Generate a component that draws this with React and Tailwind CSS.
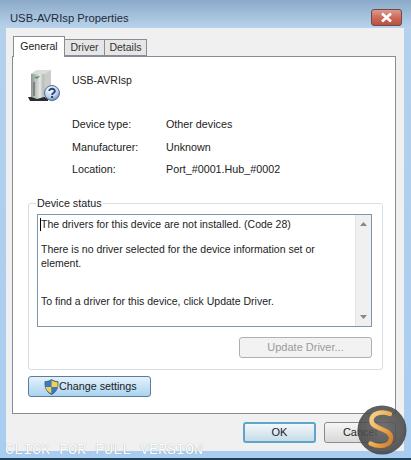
const fontStack = { fontFamily: '"Liberation Sans", Arial, sans-serif' };

function DeviceIcon() {
  return (
    <svg width="36" height="36" viewBox="0 0 36 36" className="block">
      <defs>
        <linearGradient id="tower" x1="0" x2="1" y1="0" y2="0">
          <stop offset="0" stopColor="#8f9794" />
          <stop offset="0.45" stopColor="#e4e8e6" />
          <stop offset="0.6" stopColor="#b7bdba" />
          <stop offset="1" stopColor="#eef0ef" />
        </linearGradient>
        <radialGradient id="help" cx="0.4" cy="0.3" r="0.8">
          <stop offset="0" stopColor="#ffffff" />
          <stop offset="0.6" stopColor="#b9cfe8" />
          <stop offset="1" stopColor="#4a6fa5" />
        </radialGradient>
      </defs>
      <path d="M0 28 L20 28 L20 32 L2 32 Z" fill="#2c2c2c" />
      <path d="M3 5 L9 1 L23 1 L23 26 L9 30 L3 28 Z" fill="url(#tower)" />
      <path d="M3 5 L9 1 L23 1 L17 5 Z" fill="#d9dedb" />
      <path d="M17 5 L23 1 L23 26 L17 29 Z" fill="#c8cdca" />
      <path d="M6 8 L12 7 L9 10 Z" fill="#4a9a55" />
      <rect x="5" y="13" width="2" height="14" fill="#7d8582" />
      <circle cx="24" cy="24" r="7.5" fill="url(#help)" stroke="#5b6f8c" />
      <path d="M21.3 22 C21.3 19 27 19 26.8 22.3 C26.6 24.2 24.2 24 24.1 26" fill="none" stroke="#25427c" strokeWidth="1.9" />
      <rect x="23.1" y="27" width="2" height="2" fill="#25427c" />
    </svg>
  );
}

function ShieldIcon() {
  return (
    <svg width="15" height="16" viewBox="0 0 15 16" className="block">
      <path d="M7.5 0.5 C9.5 2 11.5 2.5 14 2.5 C14.5 9 12 13.5 7.5 15.5 C3 13.5 0.5 9 1 2.5 C3.5 2.5 5.5 2 7.5 0.5 Z" fill="#3f6fae" stroke="#48597a" strokeWidth="0.8" />
      <path d="M7.5 1.5 L7.5 8 L1.6 8 C1.4 6 1.4 4.5 1.6 3.2 C3.8 3.1 5.6 2.7 7.5 1.5 Z" fill="#3d78c4" />
      <path d="M7.5 1.5 C9.4 2.7 11.2 3.1 13.4 3.2 C13.6 4.5 13.6 6 13.4 8 L7.5 8 Z" fill="#f3d24a" />
      <path d="M1.6 8 L7.5 8 L7.5 14.6 C4 13 2.2 10.8 1.6 8 Z" fill="#f3d24a" />
      <path d="M7.5 8 L13.4 8 C12.8 10.8 11 13 7.5 14.6 Z" fill="#3d78c4" />
    </svg>
  );
}

function LogoBadge() {
  return (
    <svg width="50" height="50" viewBox="0 0 50 50" className="block">
      <defs>
        <radialGradient id="disc" cx="0.5" cy="0.45" r="0.6">
          <stop offset="0" stopColor="#5f5f5f" />
          <stop offset="1" stopColor="#404041" />
        </radialGradient>
        <linearGradient id="ess" x1="0" x2="1" y1="0" y2="1">
          <stop offset="0" stopColor="#f8d590" />
          <stop offset="0.6" stopColor="#eda548" />
          <stop offset="1" stopColor="#cf7a2a" />
        </linearGradient>
      </defs>
      <circle cx="25" cy="25" r="24.5" fill="url(#disc)" fillOpacity="0.88" />
      <path d="M33 9 C24 5.5 14 8.5 14.5 16 C15 24.5 34 23 34 33 C34 41 23 43 13.5 38.5" fill="none" stroke="url(#ess)" strokeWidth="4.4" strokeLinecap="round" />
    </svg>
  );
}

function InfoRow({ label, value }) {
  return (
    <div className="flex h-[22.5px] items-center text-[10.75px] text-[#222]">
      <span className="w-[94px]">{label}</span>
      <span>{value}</span>
    </div>
  );
}

export default function App() {
  return (
    <div
      className="relative flex h-[460px] w-[411px] flex-col overflow-hidden bg-gradient-to-b from-[#b4d0ec] to-[#a9cdf0]"
      style={fontStack}
    >
      <div className="flex h-[28px] shrink-0 items-start justify-between bg-gradient-to-b from-[#8ba9c8] to-[#b9d3ec] pl-[10px] pr-[9px]">
        <span className="mt-[9px] text-[11.25px] leading-[18px] text-[#1d2b3a]">USB-AVRIsp Properties</span>
        <div className="mt-[9px] flex h-[17px] w-[31px] items-center justify-center rounded-[3px] border border-[#6e4a4a] bg-gradient-to-b from-[#d99a8e] via-[#cf6a58] to-[#b9513f]">
          <svg width="13" height="11" viewBox="0 0 13 11">
            <path d="M2 1.5 L11 9.5 M11 1.5 L2 9.5" stroke="#fff" strokeWidth="2.6" />
          </svg>
        </div>
      </div>

      <div className="ml-[6px] mr-[7px] flex h-[423px] shrink-0 flex-col bg-[#f0f0f0] pl-[6px] pr-[8px] pt-[8px]">
        <div className="flex h-[20px] shrink-0 items-end pl-px text-[10.5px]">
          <div className="relative z-10 mb-[-1px] flex h-[21px] w-[52px] items-center justify-center border border-b-0 border-[#898c95] bg-white text-[#222]">
            General
          </div>
          <div className="flex h-[17px] w-[40px] items-center justify-center border-y border-r border-[#898c95] bg-[#e6e6e6] text-[#333]">
            Driver
          </div>
          <div className="flex h-[17px] w-[42px] items-center justify-center border-y border-r border-[#898c95] bg-[#e6e6e6] text-[#333]">
            Details
          </div>
        </div>

        <div className="flex h-[358px] shrink-0 flex-col border border-[#898c95] bg-white pl-[15px] pr-[12px] pt-[12px]">
          <div className="flex h-[36px] shrink-0 items-start">
            <DeviceIcon />
            <span className="ml-[8px] mt-[3px] text-[10.5px] leading-[16px] text-[#222]">USB-AVRIsp</span>
          </div>

          <div className="mt-[8px] shrink-0 pl-[44px]">
            <InfoRow label="Device type:" value="Other devices" />
            <InfoRow label="Manufacturer:" value="Unknown" />
            <InfoRow label="Location:" value="Port_#0001.Hub_#0002" />
          </div>

          <div className="relative mt-[22.5px] h-[167px] shrink-0 rounded-[3px] border border-[#d5dfe5] pl-[8px] pr-[10px] pt-[10px]">
            <span className="absolute left-[7px] top-[-8px] bg-white px-px text-[10.75px] leading-[14px] text-[#222]">Device status</span>
            <div className="relative flex h-[113px] border border-[#7e97ad] bg-white">
              <div className="absolute left-[2px] top-[3px] h-[13px] w-px bg-black" />
              <div className="flex-1 pl-[3px] pt-[1px] text-[10.5px] leading-[13.5px] text-[#222]">
                <p className="h-[27px] leading-[16px]">The drivers for this device are not installed. (Code 28)</p>
                <p className="mb-[25px] w-[285px]">There is no driver selected for the device information set or element.</p>
                <p>To find a driver for this device, click Update Driver.</p>
              </div>
              <div className="flex w-[16px] shrink-0 flex-col items-center justify-between border-l border-[#e4e4e4] bg-[#f0f0f0] py-[7px]">
                <svg width="7" height="4" viewBox="0 0 7 4"><path d="M0 4 L3.5 0 L7 4 Z" fill="#808a90" /></svg>
                <svg width="7" height="4" viewBox="0 0 7 4"><path d="M0 0 L7 0 L3.5 4 Z" fill="#808a90" /></svg>
              </div>
            </div>
            <div className="mt-[10px] flex justify-end">
              <div className="flex h-[21px] w-[133px] items-center justify-center rounded-[3px] border border-[#b0b0b0] bg-[#f2f2f2] text-[11px] text-[#9a9a9a]">
                Update Driver...
              </div>
            </div>
          </div>

          <div className="mt-[6px] flex h-[21px] w-[123px] shrink-0 items-center rounded-[3px] border border-[#5d7c99] bg-gradient-to-b from-[#e4f2fb] to-[#a9d3f1] pl-[15px] text-[10.75px] text-[#1c1c1c]">
            <ShieldIcon />
            <span>Change settings</span>
          </div>
        </div>

        <div className="mt-[8px] flex justify-end gap-[8px]">
          <div className="flex h-[21px] w-[73px] items-center justify-center rounded-[3px] border-2 border-[#5ba6c9] bg-gradient-to-b from-[#f4f8fb] to-[#c6dbe8] text-[11px] text-[#222]">
            OK
          </div>
          <div className="flex h-[21px] w-[72px] items-center justify-center rounded-[3px] border border-[#8b8b8b] bg-gradient-to-b from-[#f6f6f6] to-[#d8d8d8] text-[11px] text-[#222]">
            Cancel
          </div>
        </div>
      </div>

      <div className="absolute inset-x-0 bottom-0 h-[2px] bg-[#1f3f55]" />

      <div className="absolute left-[357px] top-[405px]">
        <LogoBadge />
      </div>
      <span
        className="absolute left-[5px] top-[442px] text-[15px] leading-[18px] text-white [text-shadow:0_0_1px_#8a9aa8]"
        style={{ fontFamily: '"Liberation Mono", monospace' }}
      >
        CLICK FOR FULL VERSION
      </span>
    </div>
  );
}
